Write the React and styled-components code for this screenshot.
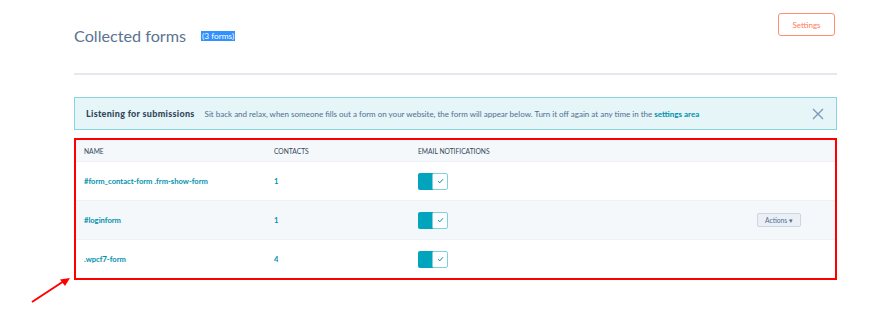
import React from 'react';
import styled, { createGlobalStyle } from 'styled-components';

// -------------- CSS Style -------------- //
const GlobalStyle = createGlobalStyle`
    html, body {
        margin: 0;
        padding: 0;
        background: #ffffff;
    }
    body {
        font-family: Lato, "Open Sans", Arial, sans-serif;
        color: #33475b;
    }
`;

const Page = styled.div`
    position: relative;
    width: 880px;
    height: 314px;
    padding: 13px 43px 0 74px;
    box-sizing: border-box;
`;

const Header = styled.div`
    display: flex;
    justify-content: space-between;
    align-items: flex-start;
    height: 60px;
    border-bottom: 2px solid #e5e9ef;
`;

const TitleGroup = styled.div`
    display: flex;
    align-items: center;
    gap: 15px;
    margin-top: 13px;
`;

const Title = styled.h1`
    margin: 0;
    font-size: 16.2px;
    font-weight: 400;
    line-height: 20px;
    color: #5a7392;
`;

const Count = styled.span`
    font-size: 8.3px;
    line-height: 10px;
    padding: 0 1px;
    background: #3390ff;
    color: #ffffff;
`;

const SettingsButton = styled.button`
    width: 57px;
    height: 23px;
    margin-right: 2px;
    border: 1px solid #ff8f73;
    border-radius: 3px;
    background: #ffffff;
    color: #ff7a59;
    font-family: inherit;
    font-size: 8px;
    cursor: pointer;
`;

const Banner = styled.div`
    display: flex;
    align-items: center;
    height: 33px;
    margin-top: 22px;
    padding: 0 12px 0 11px;
    box-sizing: border-box;
    background: #e5f5f8;
    border: 1px solid #8ad4e0;
    font-size: 8px;
`;

const BannerTitle = styled.strong`
    font-size: 9px;
    font-weight: 900;
    letter-spacing: 0.3px;
    color: #33475b;
    margin-right: 10px;
`;

const BannerText = styled.span`
    flex: 1;
    color: #516f90;
`;

const BannerLink = styled.a`
    color: #0091ae;
    font-weight: 700;
    text-decoration: none;
`;

const Close = styled.button`
    border: 0;
    padding: 0;
    background: none;
    display: flex;
    color: #7c98b6;
    cursor: pointer;
`;

const TableBox = styled.div`
    margin-top: 8px;
    border: 2px solid #ff0000;
`;

const Row = styled.div`
    display: grid;
    grid-template-columns: 190px 144px 1fr auto;
    align-items: center;
    height: ${p => p.$head ? '21px' : '39px'};
    padding: 0 34px 0 8px;
    background: ${p => p.$shade ? '#f5f8fa' : '#ffffff'};
    border-top: ${p => p.$head ? '0' : '1px solid #eef2f6'};
    font-size: ${p => p.$head ? '6.7px' : '7.6px'};
    color: ${p => p.$head ? '#33475b' : '#0091ae'};
    font-weight: ${p => p.$head ? 400 : 700};
    text-transform: ${p => p.$head ? 'uppercase' : 'none'};
    box-sizing: border-box;
`;

const Toggle = styled.div`
    display: flex;
    width: 31px;
    height: 17px;
`;

const ToggleTrack = styled.div`
    width: 15px;
    background: #00a4bd;
    border-radius: 2px 0 0 2px;
`;

const ToggleKnob = styled.div`
    width: 16px;
    display: flex;
    align-items: center;
    justify-content: center;
    background: #ffffff;
    border: 1px solid #7fd1de;
    border-radius: 2px;
    margin-left: -1px;
    box-sizing: border-box;
    color: #0091ae;
`;

const ActionsButton = styled.button`
    height: 14px;
    width: 44px;
    border: 1px solid #cbd6e2;
    border-radius: 2px;
    background: #eaf0f6;
    color: #506e91;
    font-family: inherit;
    font-size: 6.7px;
    padding: 0;
    cursor: pointer;
`;

const Arrow = styled.svg`
    position: absolute;
    left: 28px;
    top: 274px;
`;

const forms = [
    { name: '#form_contact-form .frm-show-form', contacts: 1 },
    { name: '#loginform', contacts: 1, actions: true },
    { name: '.wpcf7-form', contacts: 4 },
];

const Check = () => (
    <svg width="7" height="6" viewBox="0 0 7 6">
        <path d="M1 3.2 L2.8 4.8 L6 1.2" fill="none" stroke="currentColor" strokeWidth="1" />
    </svg>
);

const App = () => {
    return (
        <Page>
            <GlobalStyle />
            <Header>
                <TitleGroup>
                    <Title>Collected forms</Title>
                    <Count>(3 forms)</Count>
                </TitleGroup>
                <SettingsButton>Settings</SettingsButton>
            </Header>

            <Banner>
                <BannerTitle>Listening for submissions</BannerTitle>
                <BannerText>
                    Sit back and relax, when someone fills out a form on your website, the form will appear below. Turn it off again at any time in the <BannerLink href="#">settings area</BannerLink>
                </BannerText>
                <Close aria-label="Close">
                    <svg width="12" height="12" viewBox="0 0 12 12">
                        <path d="M1 1 L11 11 M11 1 L1 11" stroke="currentColor" strokeWidth="1.3" />
                    </svg>
                </Close>
            </Banner>

            <TableBox>
                <Row $head $shade>
                    <span>Name</span>
                    <span>Contacts</span>
                    <span>Email notifications</span>
                    <span />
                </Row>
                {forms.map((form, i) => (
                    <Row key={form.name} $shade={i === 1}>
                        <span>{form.name}</span>
                        <span>{form.contacts}</span>
                        <Toggle>
                            <ToggleTrack />
                            <ToggleKnob><Check /></ToggleKnob>
                        </Toggle>
                        {form.actions ? <ActionsButton>Actions ▾</ActionsButton> : <span />}
                    </Row>
                ))}
            </TableBox>

            <Arrow width="46" height="32" viewBox="0 0 46 32">
                <path d="M4 28 L36 7" stroke="#ff0000" strokeWidth="2" />
                <path d="M42 4 L32 5.5 L37 12 Z" fill="#ff0000" />
            </Arrow>
        </Page>
    );
};

export default App;
